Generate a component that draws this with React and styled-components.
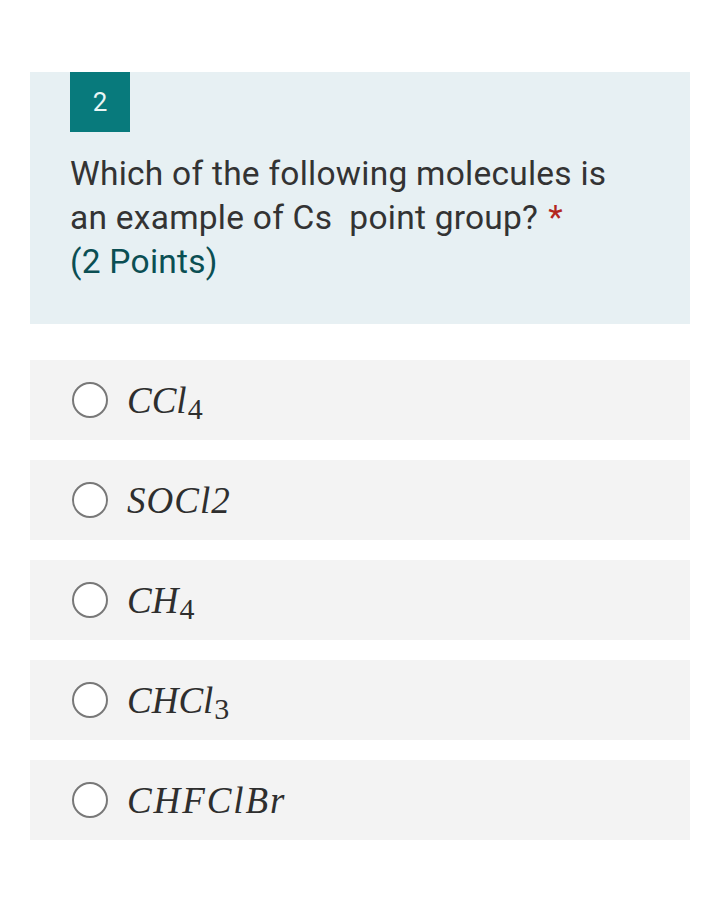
import React from "react";
import styled, { createGlobalStyle } from "styled-components";

const Global = createGlobalStyle`
  html, body { margin: 0; padding: 0; background: #ffffff; }
  body { font-family: Roboto, "Noto Sans", sans-serif; }
`;

const Page = styled.div`
  width: 720px;
  min-height: 923px;
  padding: 72px 30px 0;
  box-sizing: border-box;
  display: flex;
  flex-direction: column;
`;

const QuestionCard = styled.div`
  background: #e7f0f3;
  padding: 0 40px 0;
  height: 252px;
  box-sizing: border-box;
`;

const Badge = styled.div`
  width: 60px;
  height: 60px;
  background: #087a7c;
  color: #eaf6f6;
  font-family: Roboto, sans-serif;
  font-size: 26px;
  display: flex;
  align-items: center;
  justify-content: center;
`;

const QuestionText = styled.div`
  margin-top: 20px;
  font-family: Roboto, sans-serif;
  font-size: 33.5px;
  line-height: 44px;
  letter-spacing: 0.25px;
  color: #333333;
  padding-right: 20px;
`;

const Star = styled.span`
  color: #b3261e;
  margin-left: 10px;
`;

const Points = styled.div`
  color: #0b4f53;
`;

const Options = styled.div`
  margin-top: 36px;
  display: flex;
  flex-direction: column;
  gap: 20px;
`;

const Option = styled.div`
  height: 80px;
  background: #f3f3f3;
  display: flex;
  align-items: center;
  padding-left: 42px;
  gap: 19px;
`;

const Radio = styled.span`
  width: 32px;
  height: 32px;
  border: 2px solid #787878;
  border-radius: 50%;
  background: #ffffff;
  flex-shrink: 0;
`;

const Formula = styled.span`
  font-family: "Liberation Serif", "Times New Roman", serif;
  font-style: italic;
  font-size: 37px;
  color: #2e2e2e;
  line-height: 1;
  letter-spacing: ${(p) => p.$spacing || 0}px;
`;

const Sub = styled.sub`
  font-style: normal;
  font-size: 30px;
  vertical-align: baseline;
  position: relative;
  top: 6px;
  margin-left: 1px;
`;

const options = [
  { main: "CCl", sub: "4" },
  { main: "SOCl2", spacing: 1 },
  { main: "CH", sub: "4" },
  { main: "CHCl", sub: "3" },
  { main: "CHFClBr", spacing: 1.9 },
];

export default function App() {
  return (
    <>
      <Global />
      <Page>
        <QuestionCard>
          <Badge>2</Badge>
          <QuestionText>
            Which of the following molecules is an example of Cs&nbsp; point group?
            <Star>*</Star>
            <Points>(2 Points)</Points>
          </QuestionText>
        </QuestionCard>
        <Options>
          {options.map((o, i) => (
            <Option key={i}>
              <Radio />
              <Formula $spacing={o.spacing}>
                {o.main}
                {o.sub && <Sub>{o.sub}</Sub>}
              </Formula>
            </Option>
          ))}
        </Options>
      </Page>
    </>
  );
}
